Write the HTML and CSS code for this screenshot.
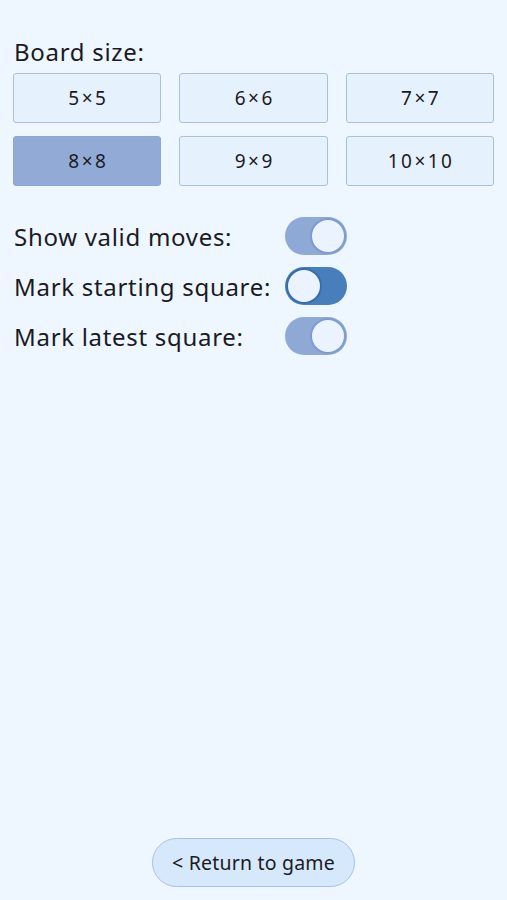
FILE: index.html
```html
<!DOCTYPE html>
<html lang="en">
<head>
    <meta charset="UTF-8">
    <meta name="viewport" content="width=device-width, initial-scale=1.0">
    <title>Settings</title>
    <link rel="stylesheet" href="styles.css">
</head>
<body>
    <div class="page">
        <div class="section-label">Board size:</div>
        <div class="size-grid">
            <button class="size-btn">5×5</button>
            <button class="size-btn">6×6</button>
            <button class="size-btn">7×7</button>
            <button class="size-btn selected">8×8</button>
            <button class="size-btn">9×9</button>
            <button class="size-btn">10×10</button>
        </div>

        <div class="options">
            <div class="option-row">
                <span class="option-label">Show valid moves:</span>
                <span class="toggle on"><span class="knob"></span></span>
            </div>
            <div class="option-row">
                <span class="option-label">Mark starting square:</span>
                <span class="toggle off"><span class="knob"></span></span>
            </div>
            <div class="option-row">
                <span class="option-label">Mark latest square:</span>
                <span class="toggle on"><span class="knob"></span></span>
            </div>
        </div>

        <button class="return-btn">&lt; Return to game</button>
    </div>
</body>
</html>
```

FILE: styles.css
```css
html, body {
    margin: 0;
    height: 100%;
}
body {
    font-family: "Noto Sans", sans-serif;
    background-color: #eef6ff;
    color: #1b1b1f;
}
.page {
    box-sizing: border-box;
    min-height: 100vh;
    padding: 36px 13px 13px 13px;
    display: flex;
    flex-direction: column;
}
.section-label {
    font-size: 24px;
    letter-spacing: 0.7px;
    line-height: 32px;
    padding-left: 1px;
    margin-bottom: 5px;
}
.size-grid {
    display: grid;
    grid-template-columns: repeat(3, 1fr);
    column-gap: 18px;
    row-gap: 13px;
}
.size-btn {
    height: 50px;
    font-family: "Noto Sans", sans-serif;
    font-size: 19px;
    letter-spacing: 2.5px;
    text-indent: 2.5px;
    color: #1b1b1f;
    background-color: #e6f1fe;
    border: 1.5px solid #aabfe0;
    border-radius: 3px;
    padding: 0;
}
.size-btn.selected {
    background-color: #91abd6;
    border-color: #8da7d3;
}
.options {
    margin-top: 31px;
    display: flex;
    flex-direction: column;
    gap: 12px;
}
.option-row {
    display: flex;
    align-items: center;
    height: 38px;
}
.option-label {
    width: 271px;
    font-size: 24px;
    letter-spacing: 0.7px;
    padding-left: 1px;
}
.toggle {
    position: relative;
    box-sizing: border-box;
    width: 62px;
    height: 38px;
    border-radius: 19px;
}
.toggle.on {
    background-color: #8ea9d6;
}
.toggle.off {
    background-color: #467fbb;
}
.knob {
    position: absolute;
    top: 1px;
    box-sizing: border-box;
    width: 36px;
    height: 36px;
    border-radius: 50%;
    background-color: #eaf3ff;
}
.toggle.on .knob {
    right: 1px;
    border: 2px solid #7f9ccd;
}
.toggle.off .knob {
    left: 1px;
    border: 2px solid #3a6ea9;
}
.return-btn {
    margin-top: auto;
    align-self: center;
    width: 203px;
    height: 49px;
    font-family: "Noto Sans", sans-serif;
    font-size: 19.5px;
    letter-spacing: 0.2px;
    color: #1b1b1f;
    background-color: #d6e8fc;
    border: 1.5px solid #a8c1e2;
    border-radius: 25px;
    padding: 0;
}
```
